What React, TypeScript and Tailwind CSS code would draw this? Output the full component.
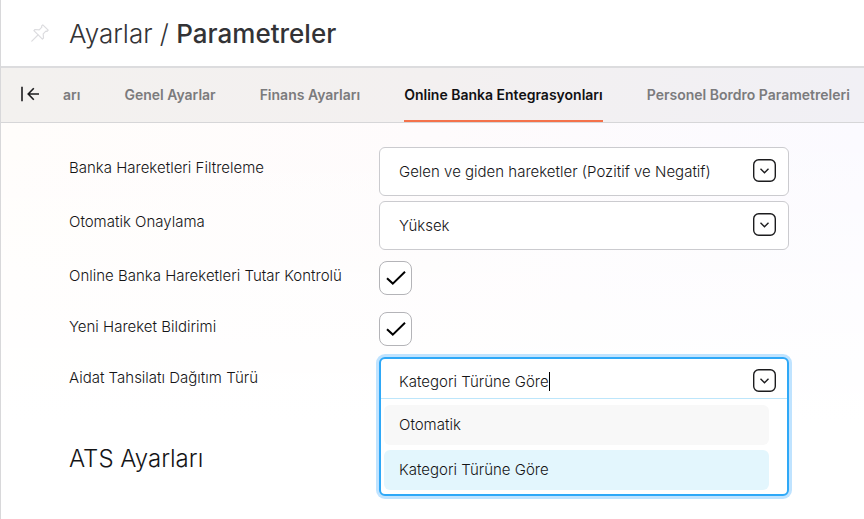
import { useState } from "react";

const tabs = ["arı", "Genel Ayarlar", "Finans Ayarları", "Online Banka Entegrasyonları", "Personel Bordro Parametreleri"];
const dagitimTurleri = ["Otomatik", "Kategori Türüne Göre"];

function PinIcon() {
  return (
    <svg width="18" height="18" viewBox="0 0 18 18" fill="none" stroke="currentColor" strokeWidth="1.2" strokeLinejoin="round" strokeLinecap="round">
      <path d="M11.8 .8 17.2 6.2 15.9 7.5 14.9 7.1 12.2 9.8 12.5 14 11.4 15.1 2.9 6.6 4 5.5 8.2 5.8 10.9 3.1 10.5 2.1Z" />
      <path d="M7 11 .8 17.2" />
    </svg>
  );
}

function CollapseIcon() {
  return (
    <svg width="20" height="16" viewBox="0 0 20 16" fill="none" stroke="currentColor" strokeWidth="1.6">
      <path d="M3 .8V15.2M20 8H9.5M14.8 2.2 9.2 8 14.8 13.8" />
    </svg>
  );
}

function ChevronBox() {
  return (
    <svg className="pointer-events-none shrink-0" width="23" height="23" viewBox="0 0 23 23" fill="none" stroke="#1c1c1e">
      <rect x="0.7" y="0.7" width="21.6" height="21.6" rx="5" strokeWidth="1.4" />
      <path d="M7.5 9.8 11.5 13.7 15.5 9.8" strokeWidth="1.4" />
    </svg>
  );
}

function Row({ id, label, children }: { id: string; label: string; children: React.ReactNode }) {
  return (
    <div className="flex items-start">
      <label htmlFor={id} className="w-[310px] shrink-0 pt-[11px] leading-5">
        {label}
      </label>
      {children}
    </div>
  );
}

function SelectField({ id, options }: { id: string; options: string[] }) {
  return (
    <div className="grid w-[410px] items-start">
      <select id={id} className="col-start-1 row-start-1 h-[49px] appearance-none rounded-md border border-[#cbcbcf] bg-white pt-[2px] pr-12 pl-[19px]">
        {options.map((o) => (
          <option key={o}>{o}</option>
        ))}
      </select>
      <div className="pointer-events-none col-start-1 row-start-1 mt-3 mr-[13px] justify-self-end">
        <ChevronBox />
      </div>
    </div>
  );
}

function CheckField({ id }: { id: string }) {
  return (
    <div className="grid place-items-center py-[6px]">
      <input
        id={id}
        type="checkbox"
        defaultChecked
        className="peer col-start-1 row-start-1 h-[34px] w-[33px] appearance-none rounded-lg border border-[#b4b4b8] bg-white"
      />
      <svg className="pointer-events-none invisible col-start-1 row-start-1 peer-checked:visible" width="20" height="16" viewBox="0 0 20 16" fill="none" stroke="#000" strokeWidth="2">
        <path d="M1 8.2 6.8 13.6 19 1.8" />
      </svg>
    </div>
  );
}

function ComboField({ id }: { id: string }) {
  const [value, setValue] = useState("Kategori Türüne Göre");
  return (
    <div className="relative h-[49px] w-[410px]">
      <div className="absolute inset-x-0 top-0 rounded-md border-2 border-[#2ea8f7] bg-white ring-3 ring-[#bfe3ff]">
        <div className="flex h-10 items-start border-b border-[#bde6fb] pr-[11px] pl-[18px]">
          <input
            id={id}
            role="combobox"
            aria-expanded="true"
            aria-controls="dagitim-listesi"
            value={value}
            onChange={(e) => setValue(e.target.value)}
            className="mt-[11px] field-sizing-content bg-transparent leading-6 caret-transparent outline-none"
          />
          <span className="mt-[13px] h-[19px] w-px bg-black" />
          <div className="mt-[10px] ml-auto">
            <ChevronBox />
          </div>
        </div>
        <ul id="dagitim-listesi" role="listbox" className="flex flex-col gap-[5px] pt-[6px] pr-[18px] pb-1 pl-[3px]">
          {dagitimTurleri.map((t) => (
            <li
              key={t}
              role="option"
              aria-selected={t === value}
              onClick={() => setValue(t)}
              className="flex h-10 items-center rounded-md bg-[#f8f8f8] pl-[15px] aria-selected:bg-[#e3f6fd]"
            >
              {t}
            </li>
          ))}
        </ul>
      </div>
    </div>
  );
}

export default function App() {
  return (
    <div className="min-h-screen overflow-hidden border-l border-[#d8d8da] bg-white font-['Inter',sans-serif] text-[15px] font-light text-[#151517]">
      <header className="flex h-[68px] items-center gap-5 border-b-2 border-[#dcdcde] pl-[30px]">
        <button aria-label="Sabitle" className="text-[#dcdcdf]">
          <PinIcon />
        </button>
        <h1 className="pt-[2px] text-[26px] leading-8 font-light text-[#333336]">
          Ayarlar / <span className="font-medium">Parametreler</span>
        </h1>
      </header>
      <nav className="flex h-[55px] items-stretch border-b border-[#d6d6d8] bg-linear-to-r from-[#f3f1ef] via-[#f3f0f0] to-[#f1f0f5]">
        <button aria-label="Menüyü daralt" className="mr-6 ml-[18px] pb-[3px] text-[#1c1c1e]">
          <CollapseIcon />
        </button>
        <div className="flex gap-11 text-sm whitespace-nowrap">
          {tabs.map((t) => (
            <a
              key={t}
              href="#"
              aria-current={t === tabs[3] ? "page" : undefined}
              className="flex items-center border-b-2 border-transparent pt-[2px] font-semibold text-[#7b7b7d] aria-[current=page]:border-[#f4724b] aria-[current=page]:text-[#111113]"
            >
              {t}
            </a>
          ))}
        </div>
      </nav>
      <main className="bg-linear-to-r from-[#fffdfb] via-[#fefbfc] to-[#fbfaff]">
        <div className="bg-linear-to-b from-transparent to-white to-[300px] pt-6 pb-10 pl-[68px]">
          <form className="flex flex-col gap-[5px]">
            <Row id="filtre" label="Banka Hareketleri Filtreleme">
              <SelectField id="filtre" options={["Gelen ve giden hareketler (Pozitif ve Negatif)"]} />
            </Row>
            <Row id="onay" label="Otomatik Onaylama">
              <SelectField id="onay" options={["Yüksek"]} />
            </Row>
            <Row id="tutar" label="Online Banka Hareketleri Tutar Kontrolü">
              <CheckField id="tutar" />
            </Row>
            <Row id="bildirim" label="Yeni Hareket Bildirimi">
              <CheckField id="bildirim" />
            </Row>
            <Row id="dagitim" label="Aidat Tahsilatı Dağıtım Türü">
              <ComboField id="dagitim" />
            </Row>
          </form>
          <h2 className="mt-[37px] text-2xl leading-8">ATS Ayarları</h2>
        </div>
      </main>
    </div>
  );
}
